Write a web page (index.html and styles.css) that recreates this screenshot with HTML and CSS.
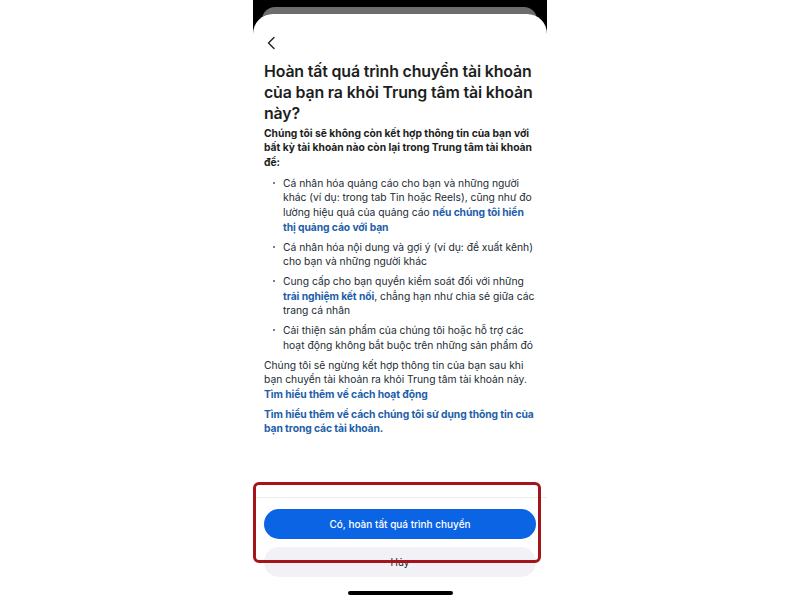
FILE: index.html
```html
<!DOCTYPE html>
<html lang="vi">
<head>
<meta charset="utf-8">
<title>Chuyển tài khoản</title>
<link rel="stylesheet" href="styles.css">
</head>
<body>
<div class="phone">
  <div class="chrome"><div class="behind"></div></div>
  <div class="sheet">
    <div class="content">
      <button class="back" aria-label="Quay lại">
        <svg width="10" height="14" viewBox="0 0 10 14"><path d="M8 1.5 L2.5 7 L8 12.5" fill="none" stroke="#1c1e21" stroke-width="1.4" stroke-linecap="round" stroke-linejoin="round"/></svg>
      </button>
      <h1 class="title">Hoàn tất quá trình chuyển tài khoản của bạn ra khỏi Trung tâm tài khoản này?</h1>
      <p class="lead">Chúng tôi sẽ không còn kết hợp thông tin của bạn với bất kỳ tài khoản nào còn lại trong Trung tâm tài khoản để:</p>
      <ul class="list">
        <li>Cá nhân hóa quảng cáo cho bạn và những người khác (ví dụ: trong tab Tin hoặc Reels), cũng như đo lường hiệu quả của quảng cáo <a class="link">nếu chúng tôi hiển thị quảng cáo với bạn</a></li>
        <li>Cá nhân hóa nội dung và gợi ý (ví dụ: đề xuất kênh) cho bạn và những người khác</li>
        <li>Cung cấp cho bạn quyền kiểm soát đối với những <a class="link">trải nghiệm kết nối</a>, chẳng hạn như chia sẻ giữa các trang cá nhân</li>
        <li>Cải thiện sản phẩm của chúng tôi hoặc hỗ trợ các hoạt động không bắt buộc trên những sản phẩm đó</li>
      </ul>
      <p class="para">Chúng tôi sẽ ngừng kết hợp thông tin của bạn sau khi bạn chuyển tài khoản ra khỏi Trung tâm tài khoản này. <a class="link">Tìm hiểu thêm về cách hoạt động</a></p>
      <p class="para"><a class="link">Tìm hiểu thêm về cách chúng tôi sử dụng thông tin của bạn trong các tài khoản.</a></p>
    </div>
    <div class="footer">
      <button class="btn primary">Có, hoàn tất quá trình chuyển</button>
      <button class="btn secondary">Hủy</button>
      <div class="home"></div>
      <div class="highlight"></div>
    </div>
  </div>
</div>
</body>
</html>
```

FILE: styles.css
```css
* { box-sizing: border-box; }
html, body { margin: 0; padding: 0; }
body {
  width: 800px;
  height: 600px;
  overflow: hidden;
  background: #ffffff;
  font-family: Inter, "Noto Sans", sans-serif;
  color: #1c1e21;
}
.phone {
  width: 294px;
  height: 600px;
  margin: 0 auto;
  display: flex;
  flex-direction: column;
}
.chrome {
  background: #000000;
  height: 34px;
  padding: 7px 10px 0 9px;
  flex: none;
}
.behind {
  height: 27px;
  background: #6d6d6d;
  border-radius: 13px 13px 0 0;
}
.sheet {
  margin-top: -20px;
  flex: 1;
  background: #ffffff;
  border-radius: 20px 20px 0 0;
  display: flex;
  flex-direction: column;
  position: relative;
}
.content {
  flex: 1;
  padding: 22px 9px 0 11px;
}
.back {
  display: block;
  border: 0;
  background: none;
  padding: 0;
  margin: 0 0 0 2px;
  width: 10px;
  height: 14px;
}
.back svg { display: block; }
.title {
  margin: 11px 0 0 0;
  font-size: 15.9px;
  font-weight: 600;
  line-height: 21.2px;
  letter-spacing: -0.15px;
  color: #1c1e21;
}
.lead {
  margin: 1px 0 0 0;
  font-size: 10.3px;
  font-weight: 700;
  line-height: 14.6px;
  color: #1c1e21;
}
.list {
  list-style: none;
  margin: 6.5px 0 0 0;
  padding: 0;
}
.list li {
  position: relative;
  padding-left: 19px;
  font-size: 10.3px;
  line-height: 14.6px;
  margin-bottom: 5.3px;
  color: #1c2b33;
}
.list li::before {
  content: "";
  position: absolute;
  left: 9px;
  top: 6px;
  width: 2.2px;
  height: 2.2px;
  border-radius: 50%;
  background: #555;
}
.para {
  margin: 0 0 5.3px 0;
  font-size: 10.3px;
  line-height: 14.6px;
  color: #1c2b33;
}
.link {
  color: #1d5ea9;
  font-weight: 700;
  letter-spacing: -0.08px;
  text-decoration: none;
}
.footer {
  flex: none;
  position: relative;
  border-top: 1px solid #ececec;
  padding: 11px 11px 5px 11px;
  display: flex;
  flex-direction: column;
  align-items: center;
}
.btn {
  width: 272px;
  height: 30px;
  border: 0;
  border-radius: 15px;
  font-family: Inter, "Noto Sans", sans-serif;
  font-size: 10px;
  padding: 0;
}
.primary {
  background: #0a64e4;
  color: #ffffff;
  font-weight: 500;
}
.secondary {
  margin-top: 8px;
  background: #f1f1f6;
  color: #1c1e21;
  font-weight: 400;
}
.home {
  margin-top: 14px;
  width: 105px;
  height: 4px;
  border-radius: 2px;
  background: #000000;
}
.highlight {
  position: absolute;
  left: 0;
  top: -16px;
  width: 288px;
  height: 81px;
  border: 3px solid #a5141b;
  border-radius: 6px;
}
```
